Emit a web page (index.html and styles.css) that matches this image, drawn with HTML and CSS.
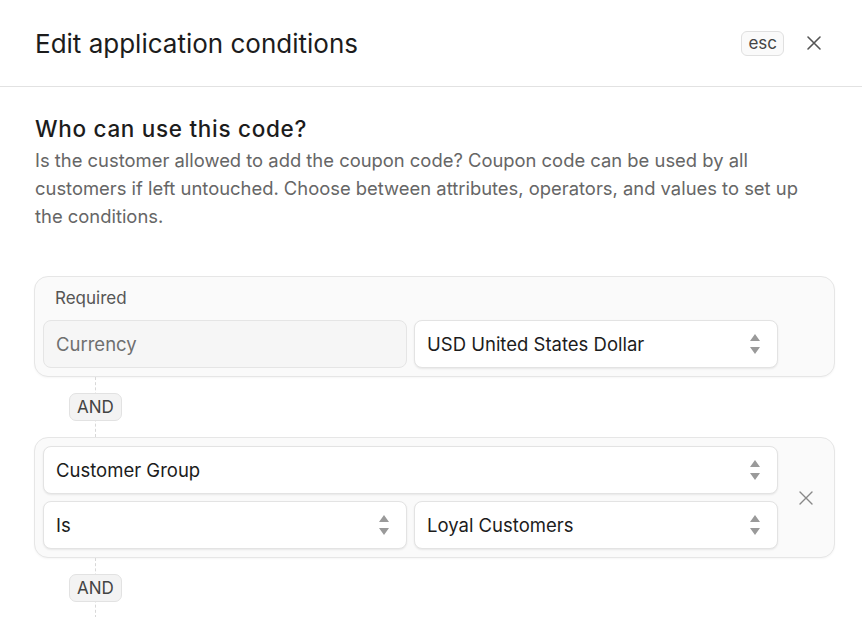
FILE: index.html
```html
<!DOCTYPE html>
<html lang="en">
<head>
  <meta charset="UTF-8">
  <meta name="viewport" content="width=device-width, initial-scale=1.0">
  <title>Edit application conditions</title>
  <link rel="stylesheet" href="styles.css">
</head>
<body>

  <header class="modal-header">
    <h1 class="modal-title">Edit application conditions</h1>
    <div class="header-actions">
      <span class="kbd">esc</span>
      <button class="icon-btn" type="button" aria-label="Close">
        <svg width="16" height="16" viewBox="0 0 16 16" fill="none" stroke="currentColor" stroke-width="1.6" stroke-linecap="round">
          <path d="M2 2L14 14M14 2L2 14"/>
        </svg>
      </button>
    </div>
  </header>

  <main class="modal-body">
    <h2 class="section-title">Who can use this code?</h2>
    <p class="section-text">Is the customer allowed to add the coupon code? Coupon code can be used by all customers if left untouched. Choose between attributes, operators, and values to set up the conditions.</p>

    <div class="conditions">
      <div class="condition">
        <div class="condition-label">Required</div>
        <div class="field field-disabled">Currency</div>
        <div class="field field-select">
          <span>USD United States Dollar</span>
          <svg class="sort-icon" width="12" height="22" viewBox="0 0 12 22"><path d="M6 1L11 8H1Z M6 21L11 14H1Z" fill="currentColor"/></svg>
        </div>
      </div>

      <div class="connector"><span class="badge">AND</span></div>

      <div class="condition">
        <div class="field field-select field-wide">
          <span>Customer Group</span>
          <svg class="sort-icon" width="12" height="22" viewBox="0 0 12 22"><path d="M6 1L11 8H1Z M6 21L11 14H1Z" fill="currentColor"/></svg>
        </div>
        <button class="icon-btn remove-btn" type="button" aria-label="Remove">
          <svg width="16" height="16" viewBox="0 0 16 16" fill="none" stroke="currentColor" stroke-width="1.4" stroke-linecap="round">
            <path d="M2 2L14 14M14 2L2 14"/>
          </svg>
        </button>
        <div class="field field-select">
          <span>Is</span>
          <svg class="sort-icon" width="12" height="22" viewBox="0 0 12 22"><path d="M6 1L11 8H1Z M6 21L11 14H1Z" fill="currentColor"/></svg>
        </div>
        <div class="field field-select">
          <span>Loyal Customers</span>
          <svg class="sort-icon" width="12" height="22" viewBox="0 0 12 22"><path d="M6 1L11 8H1Z M6 21L11 14H1Z" fill="currentColor"/></svg>
        </div>
      </div>

      <div class="connector"><span class="badge">AND</span></div>
    </div>
  </main>

</body>
</html>
```

FILE: styles.css
```css
body {
  margin: 0;
  font-family: Inter, "Noto Sans", Arial, sans-serif;
  color: #1c1c1c;
  background-color: #fff;
}

.modal-header {
  display: flex;
  align-items: center;
  justify-content: space-between;
  height: 86px;
  padding: 0 40px 0 35px;
  border-bottom: 1px solid #e2e2e2;
}

.modal-title {
  margin: 0;
  font-size: 26px;
  font-weight: 400;
}

.header-actions {
  display: flex;
  align-items: center;
  gap: 22px;
}

.kbd {
  display: inline-block;
  padding: 1px 6px 2px;
  font-size: 17px;
  line-height: 20px;
  color: #444;
  border: 1px solid #e0e0e0;
  border-radius: 6px;
  background-color: #fafafa;
}

.icon-btn {
  display: flex;
  align-items: center;
  justify-content: center;
  padding: 0;
  border: none;
  background: none;
  color: #555;
  cursor: pointer;
}

.modal-body {
  padding: 28px 27px 0 35px;
}

.section-title {
  margin: 0;
  font-size: 22.5px;
  line-height: 28px;
  font-weight: 500;
  letter-spacing: 0.7px;
}

.section-text {
  max-width: 780px;
  margin: 3px 0 0;
  font-size: 18.4px;
  line-height: 28px;
  color: #666;
}

.conditions {
  margin: 46px 0 0 -1px;
}

.condition {
  display: grid;
  grid-template-columns: 1fr 1fr 41px;
  gap: 7px;
  padding: 8px;
  border: 1px solid #e6e6e6;
  border-radius: 14px;
  background-color: #fafafa;
  box-shadow: 0 1px 2px rgba(0, 0, 0, 0.04);
}

.condition-label {
  grid-column: 1 / -1;
  padding: 1px 12px 3px;
  font-size: 17px;
  line-height: 24px;
  color: #555;
}

.field {
  display: flex;
  align-items: center;
  justify-content: space-between;
  height: 48px;
  padding: 0 16px 0 12px;
  box-sizing: border-box;
  border-radius: 8px;
  font-size: 18.5px;
}

.field-disabled {
  grid-column: 1;
  background-color: #f6f6f6;
  border: 1px solid #e5e5e5;
  color: #6f6f6f;
}

.field-select {
  background-color: #fff;
  border: 1px solid #e3e3e3;
  box-shadow: 0 1px 2px rgba(0, 0, 0, 0.08);
}

.field-wide {
  grid-column: 1 / 3;
}

.sort-icon {
  color: #9a9a9a;
}

.remove-btn {
  grid-column: 3;
  grid-row: 1 / 3;
  color: #888;
}

.connector {
  position: relative;
  display: flex;
  align-items: center;
  height: 60px;
  padding-left: 35px;
}

.connector::before {
  content: "";
  position: absolute;
  left: 61px;
  top: 0;
  bottom: 0;
  border-left: 1px dashed #d8d8d8;
}

.badge {
  position: relative;
  padding: 3px 7px;
  font-size: 17px;
  line-height: 20px;
  color: #444;
  background-color: #f3f3f3;
  border: 1px solid #e2e2e2;
  border-radius: 7px;
}
```
